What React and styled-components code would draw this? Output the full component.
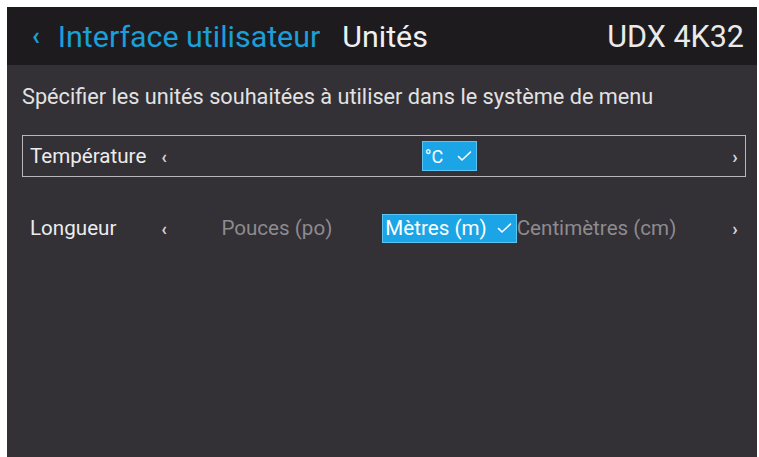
import React from "react";
import styled, { createGlobalStyle } from "styled-components";

const Global = createGlobalStyle`
  html, body { margin: 0; padding: 0; background: #ffffff; }
  body { font-family: Roboto, "Liberation Sans", sans-serif; }
`;

const Screen = styled.div`
  margin: 7px 2px 0 7px;
  height: 450px;
  background: #333036;
  display: flex;
  flex-direction: column;
  overflow: hidden;
`;

const Header = styled.header`
  height: 58px;
  flex-shrink: 0;
  background: #1d1b1e;
  display: flex;
  align-items: center;
  padding: 0 13px 0 25px;
  font-size: 30.4px;
`;

const Crumb = styled.span`
  color: #1c9fd9;
  display: flex;
  align-items: center;
`;

const Back = styled.span`
  margin-right: 18px;
  font-size: 25px;
  font-weight: 700;
`;

const Current = styled.span`
  color: #f0f0f0;
  margin-left: 22px;
`;

const Model = styled.span`
  color: #eaeaea;
  margin-left: auto;
  font-size: 30.5px;
`;

const Body = styled.main`
  padding: 19px 11px 0 15px;
  display: flex;
  flex-direction: column;
`;

const Description = styled.p`
  margin: 0 0 25px;
  color: #e2e2e2;
  font-size: 21.7px;
  line-height: 26px;
`;

const Row = styled.div`
  display: grid;
  grid-template-columns: 126px 16px 1fr 16px;
  align-items: center;
  height: 42px;
  box-sizing: border-box;
  padding: 0 2px 0 7px;
  border: 1.5px solid ${(p) => (p.$boxed ? "#b9b7bb" : "transparent")};
  margin-bottom: ${(p) => (p.$boxed ? "30px" : "0")};
  color: #e6e6e6;
  font-size: 20.6px;
`;

const Label = styled.span`
  color: #ececec;
`;

const Arrow = styled.span`
  color: #d8d8d8;
  font-size: 18px;
  font-weight: 700;
  text-align: center;
`;

const Values = styled.div`
  display: grid;
  grid-template-columns: 1fr auto 1fr;
  align-items: center;
`;

const Side = styled.span`
  color: #8d8b8f;
  justify-self: ${(p) => (p.$left ? "end" : "start")};
  padding-right: ${(p) => (p.$left ? "50px" : "0")};
`;

const Selected = styled.span`
  background: #1ca5e6;
  border: 1px solid #5cc4f2;
  color: #ffffff;
  display: inline-flex;
  align-items: center;
  gap: ${(p) => (p.$wide ? "14px" : "10px")};
  padding: 0 4px 0 2px;
  height: ${(p) => (p.$tall ? "28px" : "27px")};
  font-size: ${(p) => (p.$wide ? "18px" : "20.6px")};
`;

const Check = () => (
  <svg width="15" height="12" viewBox="0 0 15 12">
    <polyline points="1.5,6.5 5,10 13.5,2" fill="none" stroke="#ffffff" strokeWidth="1.6" strokeLinecap="round" strokeLinejoin="round" />
  </svg>
);

export default function App() {
  return (
    <>
      <Global />
      <Screen>
        <Header>
          <Crumb>
            <Back>‹</Back>
            Interface utilisateur
          </Crumb>
          <Current>Unités</Current>
          <Model>UDX 4K32</Model>
        </Header>
        <Body>
          <Description>Spécifier les unités souhaitées à utiliser dans le système de menu</Description>
          <Row $boxed>
            <Label>Température</Label>
            <Arrow>‹</Arrow>
            <Values>
              <Side $left />
              <Selected $tall $wide>°C <Check /></Selected>
              <Side />
            </Values>
            <Arrow>›</Arrow>
          </Row>
          <Row>
            <Label>Longueur</Label>
            <Arrow>‹</Arrow>
            <Values>
              <Side $left>Pouces (po)</Side>
              <Selected>Mètres (m) <Check /></Selected>
              <Side>Centimètres (cm)</Side>
            </Values>
            <Arrow>›</Arrow>
          </Row>
        </Body>
      </Screen>
    </>
  );
}
